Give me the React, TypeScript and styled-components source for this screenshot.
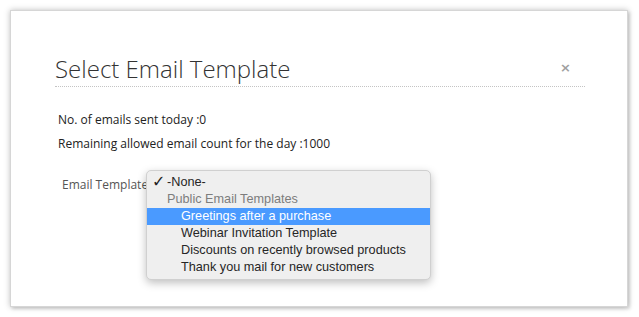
import styled, { createGlobalStyle } from 'styled-components';

const GlobalStyle = createGlobalStyle`
  html, body {
    margin: 0;
    padding: 0;
    background: #ffffff;
  }
  body {
    font-family: 'Open Sans', 'Liberation Sans', sans-serif;
  }
`;

const Page = styled.div`
  width: 639px;
  height: 317px;
  padding: 10px 11px 10px 10px;
  box-sizing: border-box;
`;

const Modal = styled.div`
  width: 618px;
  height: 297px;
  box-sizing: border-box;
  background: #fff;
  border: 1px solid #d6d6d6;
  box-shadow: 0 0 6px rgba(0, 0, 0, 0.25), 2px 2px 3px rgba(0, 0, 0, 0.12);
  padding: 42px 42px 0 44px;
`;

const Header = styled.div`
  display: flex;
  align-items: center;
  justify-content: space-between;
  border-bottom: 1px dotted #c4c4c4;
  padding-bottom: 1px;
`;

const Title = styled.h1`
  margin: 0;
  font-family: 'Open Sans', sans-serif;
  font-weight: 300;
  font-size: 24px;
  line-height: 32px;
  color: #333;
`;

const Close = styled.span`
  font-family: 'DejaVu Sans', sans-serif;
  font-weight: bold;
  font-size: 13px;
  line-height: 13px;
  color: #a0a0a0;
  margin-right: 14px;
  margin-bottom: 4px;
`;

const Stats = styled.div`
  padding: 24px 0 0 3px;
  display: flex;
  flex-direction: column;
  gap: 7px;
`;

const StatLine = styled.p`
  margin: 0;
  font-size: 12px;
  line-height: 17px;
  color: #222;
`;

const FieldRow = styled.div`
  display: flex;
  align-items: center;
  margin: 24px 0 0 7px;
`;

const Label = styled.span`
  flex: none;
  width: 84px;
  font-size: 12px;
  line-height: 17px;
  color: #555;
  white-space: nowrap;
`;

const SelectWrap = styled.div`
  position: relative;
  width: 200px;
  height: 17px;
`;

const Menu = styled.ul`
  position: absolute;
  left: 0;
  top: -6px;
  width: 283px;
  margin: 0;
  padding: 3px 0 3px;
  list-style: none;
  background: #efefef;
  border: 1px solid #d0d0d0;
  border-radius: 5px;
  box-shadow: 0 3px 8px rgba(0, 0, 0, 0.25);
  font-family: 'Liberation Sans', 'Helvetica', sans-serif;
  font-size: 12.7px;
`;

const Option = styled.li<{ $indent?: boolean; $active?: boolean; $muted?: boolean }>`
  position: relative;
  height: 17px;
  line-height: 17px;
  padding-left: ${(p) => (p.$indent ? 34 : 20)}px;
  background: ${(p) => (p.$active ? '#4a9aff' : 'transparent')};
  color: ${(p) => (p.$active ? '#fff' : p.$muted ? '#7d7d7d' : '#262626')};
  white-space: nowrap;
`;

const Check = styled.span`
  position: absolute;
  left: 5px;
  top: -1px;
  font-family: 'DejaVu Sans', sans-serif;
  font-size: 16px;
  color: #222;
`;

const templates = [
  'Greetings after a purchase',
  'Webinar Invitation Template',
  'Discounts on recently browsed products',
  'Thank you mail for new customers',
];

export default function App() {
  return (
    <Page>
      <GlobalStyle />
      <Modal>
        <Header>
          <Title>Select Email Template</Title>
          <Close>×</Close>
        </Header>
        <Stats>
          <StatLine>No. of emails sent today :0</StatLine>
          <StatLine>Remaining allowed email count for the day :1000</StatLine>
        </Stats>
        <FieldRow>
          <Label>Email Template</Label>
          <SelectWrap>
            <Menu>
              <Option>
                <Check>✓</Check>-None-
              </Option>
              <Option $muted>Public Email Templates</Option>
              {templates.map((t, i) => (
                <Option key={t} $indent $active={i === 0}>
                  {t}
                </Option>
              ))}
            </Menu>
          </SelectWrap>
        </FieldRow>
      </Modal>
    </Page>
  );
}
